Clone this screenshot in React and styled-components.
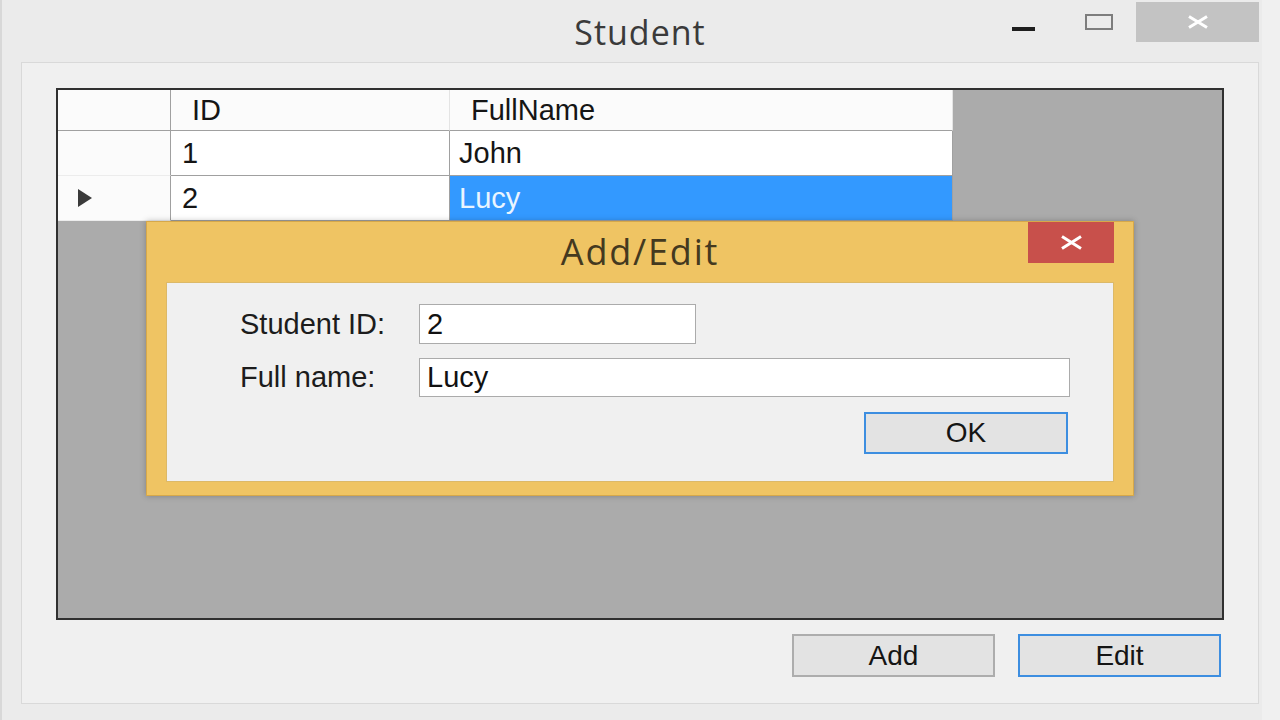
import React from "react";
import styled, { createGlobalStyle } from "styled-components";

const GlobalStyle = createGlobalStyle`
  html, body {
    margin: 0;
    padding: 0;
    background: #f0f0f0;
  }
  * {
    box-sizing: border-box;
  }
`;

const students = [
  { id: "1", name: "John" },
  { id: "2", name: "Lucy" },
];

const Page = styled.div`
  position: relative;
  width: 1280px;
  height: 720px;
  overflow: hidden;
  font-family: "Liberation Sans", Arial, sans-serif;
  color: #151515;
`;

const Frame = styled.div`
  width: 1262px;
  height: 720px;
  background: #ebebeb;
  border-left: 2px solid #d8d8d8;
  padding: 0 3px 16px 19px;
  display: flex;
  flex-direction: column;
`;

const TitleBar = styled.div`
  height: 62px;
  padding-top: 2px;
  display: grid;
  grid-template-columns: 1fr auto 1fr;
`;

const Title = styled.div`
  grid-column: 2;
  align-self: center;
  font-family: "Open Sans", "Noto Sans", sans-serif;
  font-size: ${(p) => p.$size || 34}px;
  letter-spacing: ${(p) => p.$spacing || 1}px;
  color: ${(p) => p.$color || "#3a3a3a"};
  line-height: 1;
`;

const Controls = styled.div`
  grid-column: 3;
  justify-self: end;
  align-self: start;
  display: flex;
  align-items: flex-start;
`;

const MinGlyph = styled.div`
  width: 23px;
  height: 4px;
  margin-top: 25px;
  margin-right: 50px;
  background: #1e1e1e;
`;

const MaxGlyph = styled.div`
  width: 28px;
  height: 16px;
  margin-top: 12px;
  margin-right: 23px;
  border: 2px solid #7d7d7d;
`;

const CloseButton = styled.div`
  width: ${(p) => p.$w}px;
  height: ${(p) => p.$h}px;
  background: ${(p) => p.$bg};
  display: flex;
  align-items: center;
  justify-content: center;
`;

const Client = styled.div`
  flex: 1;
  background: #f0f0f0;
  border: 1px solid #d9d9d9;
  padding: 25px 34px 0 34px;
  display: flex;
  flex-direction: column;
`;

const DataGrid = styled.div`
  height: 532px;
  border: 2px solid #303030;
  background: #ababab;
`;

const Table = styled.div`
  display: grid;
  grid-template-columns: 113px 279px 503px;
  grid-template-rows: 41px 45px 45px;
  width: fit-content;
`;

const Cell = styled.div`
  display: flex;
  align-items: center;
  font-size: 29px;
  padding-left: ${(p) => p.$pad || 10}px;
  background: ${(p) =>
    p.$selected ? "#3399ff" : p.$kind === "data" ? "#ffffff" : "#fbfbfb"};
  color: ${(p) => (p.$selected ? "#eaf5ff" : "#151515")};
  border-right: 1px solid
    ${(p) => (p.$kind === "header" && !p.$first ? "#e4e4e4" : "#a0a0a0")};
  border-bottom: 1px solid
    ${(p) => (p.$kind === "rowhead" ? "#ececec" : "#a0a0a0")};
`;

const RowArrow = styled.div`
  width: 0;
  height: 0;
  border-top: 9px solid transparent;
  border-bottom: 9px solid transparent;
  border-left: 14px solid #3a3a3a;
`;

const ButtonRow = styled.div`
  margin-top: 14px;
  padding-right: 3px;
  display: flex;
  justify-content: flex-end;
  gap: 23px;
`;

const WinButton = styled.button`
  width: ${(p) => p.$w || 203}px;
  height: ${(p) => p.$h || 43}px;
  background: #e3e3e3;
  border: 2px solid ${(p) => (p.$default ? "#3d8ee0" : "#adadad")};
  font-family: "Liberation Sans", Arial, sans-serif;
  font-size: 28px;
  color: #151515;
  padding: 0;
`;

const Dialog = styled.div`
  position: absolute;
  left: 146px;
  top: 221px;
  width: 988px;
  height: 275px;
  background: #efc463;
  border: 1px solid #d6a84a;
  box-shadow: 0 0 6px rgba(0, 0, 0, 0.25);
  padding: 0 19px 13px 19px;
  display: flex;
  flex-direction: column;
`;

const DialogTitleBar = styled.div`
  height: 60px;
  display: grid;
  grid-template-columns: 1fr auto 1fr;
`;

const DialogControls = styled.div`
  grid-column: 3;
  justify-self: end;
  align-self: start;
`;

const DialogBody = styled.div`
  flex: 1;
  background: #f0f0f0;
  border: 1px solid #dcb968;
  padding: 21px 43px 0 73px;
`;

const Form = styled.div`
  display: grid;
  grid-template-columns: 179px 1fr;
  row-gap: 14px;
  align-items: center;
`;

const Label = styled.div`
  font-size: 29px;
  color: #1c1c1c;
`;

const TextBox = styled.div`
  width: ${(p) => p.$w}px;
  height: ${(p) => p.$h || 40}px;
  background: #ffffff;
  border: 1px solid #ababab;
  padding-left: 7px;
  display: flex;
  align-items: center;
  font-size: 29px;
  color: #111;
`;

const OkRow = styled.div`
  grid-column: 2;
  justify-self: end;
  margin-top: 1px;
  margin-right: 2px;
`;

const CrossIcon = ({ w = 22, h = 15 }) => (
  <svg width={w} height={h} viewBox={`0 0 ${w} ${h}`}>
    <path
      d={`M2 1.5 L${w - 2} ${h - 1.5} M${w - 2} 1.5 L2 ${h - 1.5}`}
      stroke="#ffffff"
      strokeWidth="3"
      fill="none"
    />
  </svg>
);

export default function App() {
  return (
    <Page>
      <GlobalStyle />
      <Frame>
        <TitleBar>
          <Title>Student</Title>
          <Controls>
            <MinGlyph />
            <MaxGlyph />
            <CloseButton $w={123} $h={40} $bg="#c3c3c3">
              <CrossIcon w={22} h={14} />
            </CloseButton>
          </Controls>
        </TitleBar>
        <Client>
          <DataGrid>
            <Table>
              <Cell $kind="header" $first />
              <Cell $kind="header" $pad={21}>
                ID
              </Cell>
              <Cell $kind="header" $pad={21}>
                FullName
              </Cell>
              {students.map((s, i) => (
                <React.Fragment key={s.id}>
                  <Cell $kind="rowhead" $pad={20}>
                    {i === students.length - 1 && <RowArrow />}
                  </Cell>
                  <Cell $kind="data" $pad={11}>
                    {s.id}
                  </Cell>
                  <Cell
                    $kind="data"
                    $pad={9}
                    $selected={i === students.length - 1}
                  >
                    {s.name}
                  </Cell>
                </React.Fragment>
              ))}
            </Table>
          </DataGrid>
          <ButtonRow>
            <WinButton>Add</WinButton>
            <WinButton $default>Edit</WinButton>
          </ButtonRow>
        </Client>
      </Frame>

      <Dialog>
        <DialogTitleBar>
          <Title $size={36} $spacing={1.8} $color="#44391f">
            Add/Edit
          </Title>
          <DialogControls>
            <CloseButton $w={86} $h={41} $bg="#c8504b">
              <CrossIcon w={23} h={15} />
            </CloseButton>
          </DialogControls>
        </DialogTitleBar>
        <DialogBody>
          <Form>
            <Label>Student ID:</Label>
            <TextBox $w={277}>2</TextBox>
            <Label>Full name:</Label>
            <TextBox $w={651} $h={39}>
              Lucy
            </TextBox>
            <OkRow>
              <WinButton $w={204} $h={42} $default>
                OK
              </WinButton>
            </OkRow>
          </Form>
        </DialogBody>
      </Dialog>
    </Page>
  );
}
